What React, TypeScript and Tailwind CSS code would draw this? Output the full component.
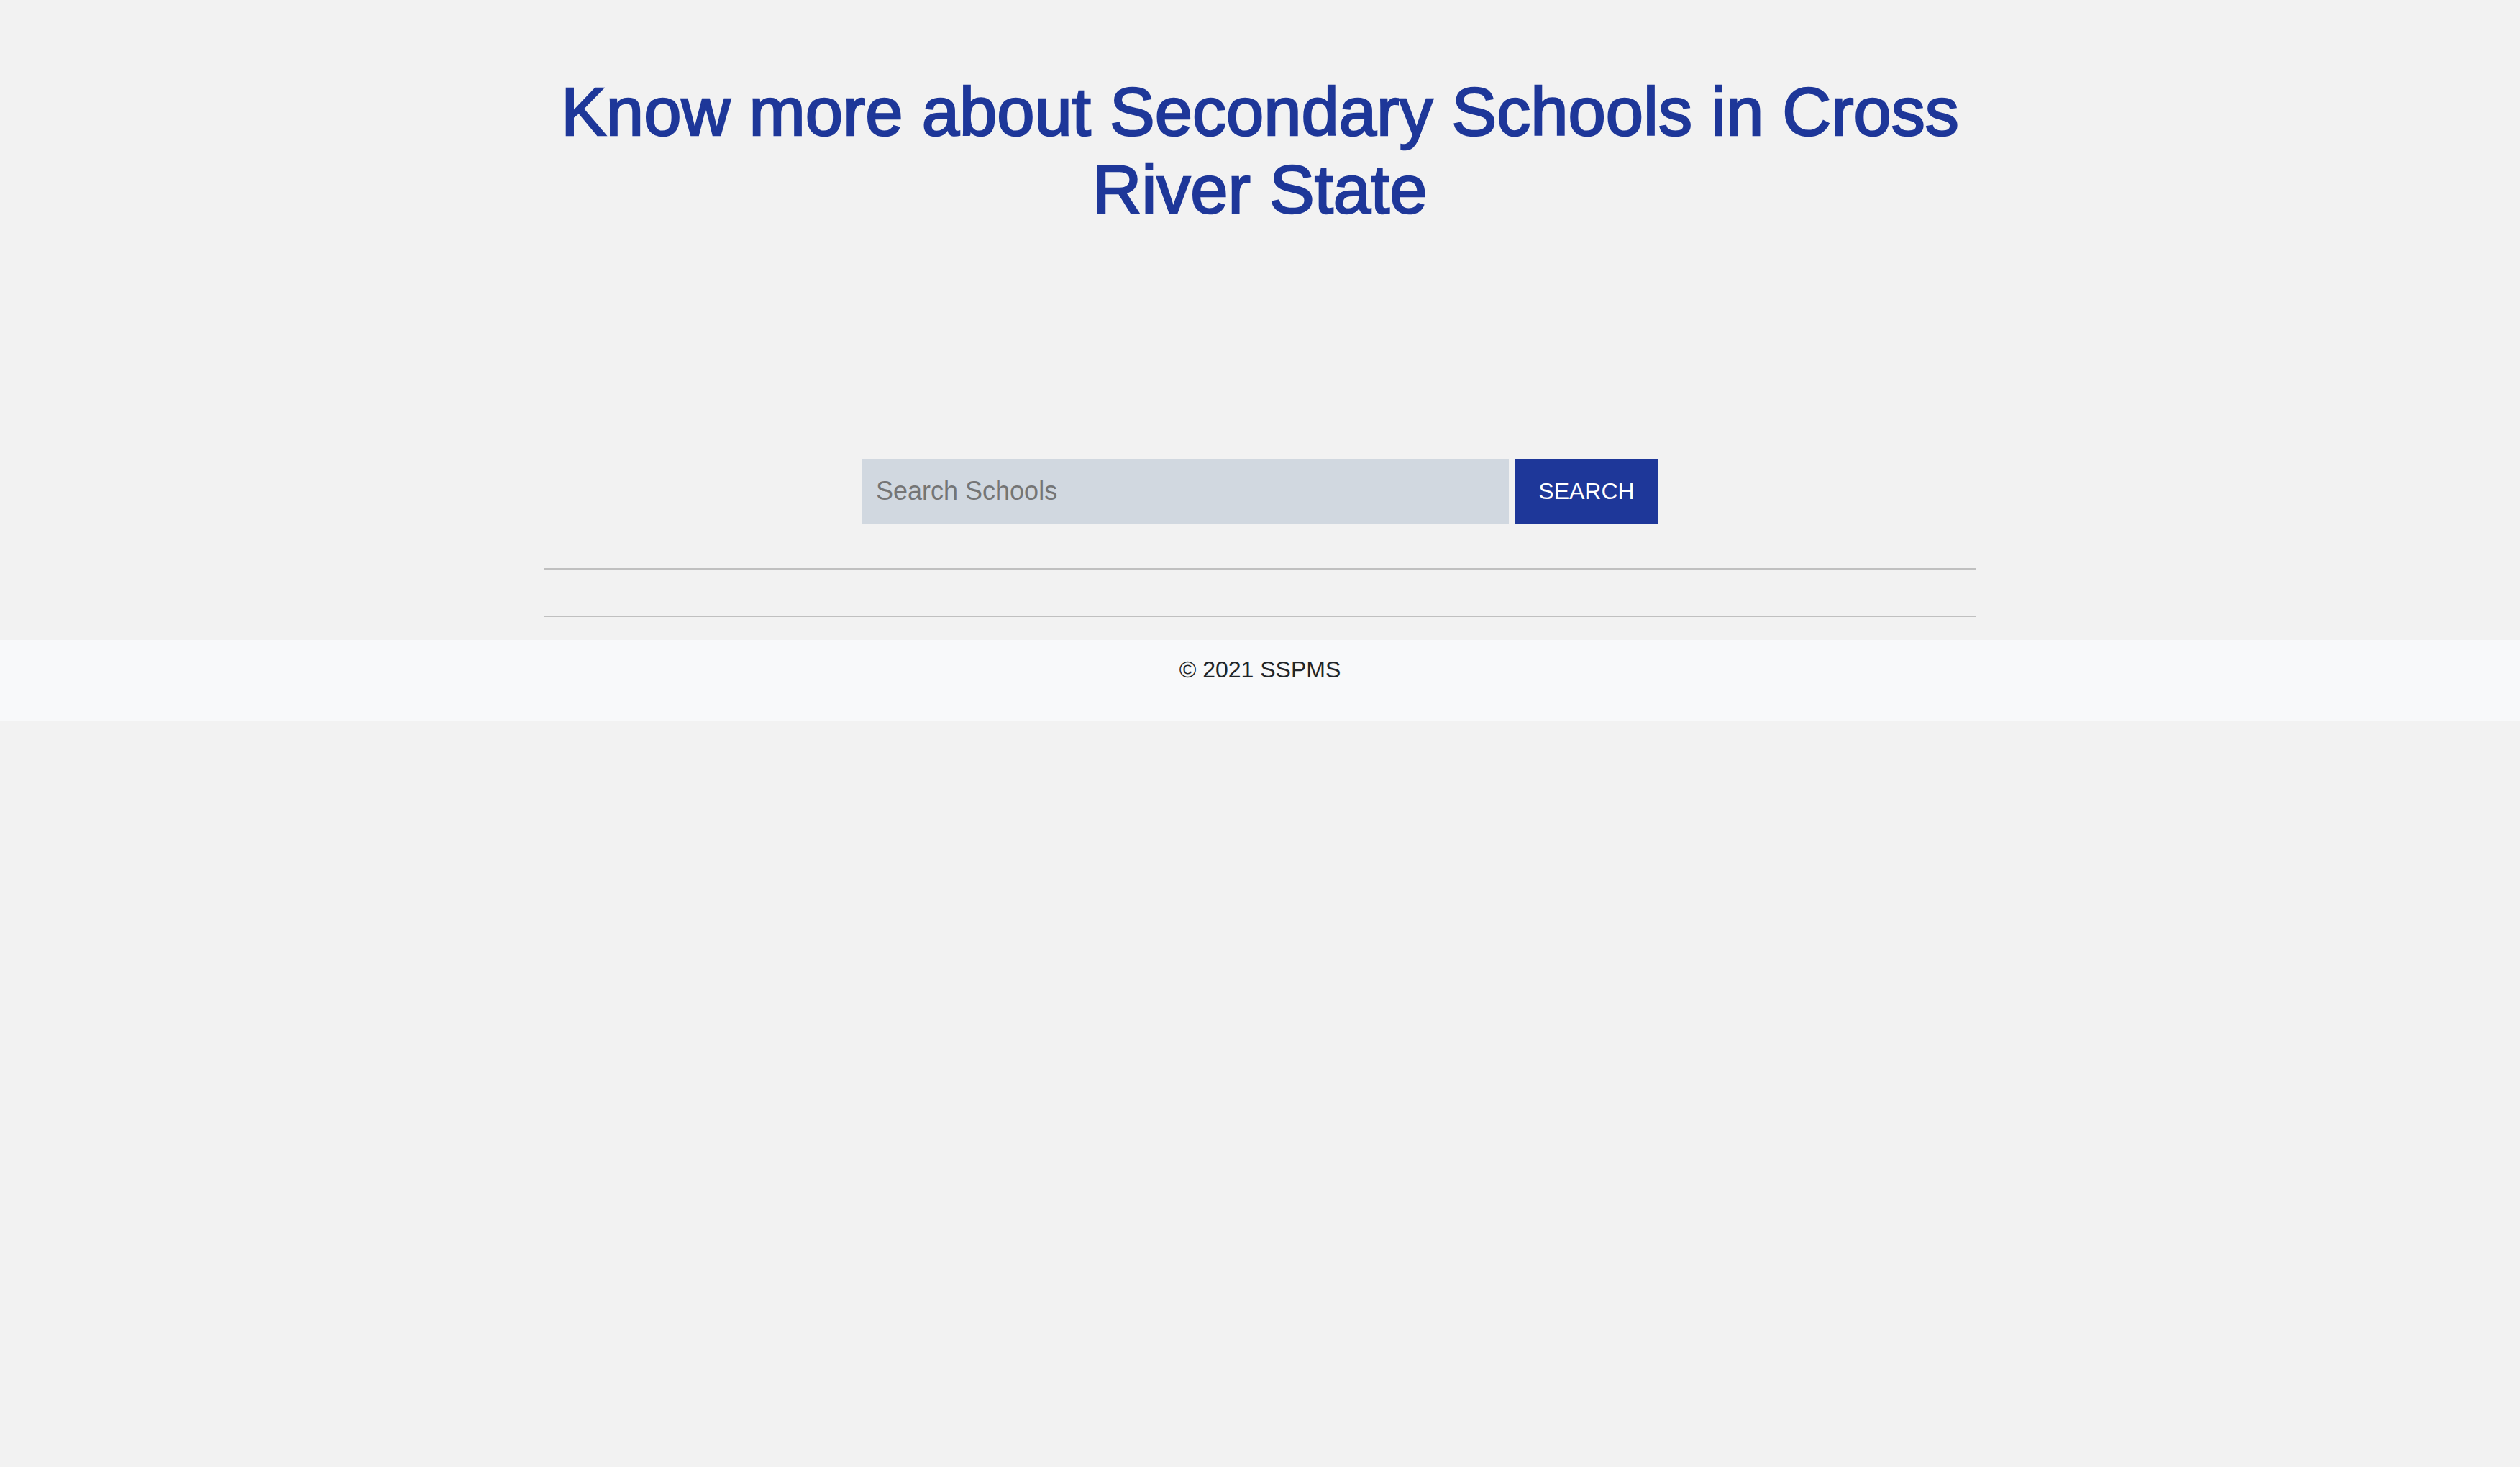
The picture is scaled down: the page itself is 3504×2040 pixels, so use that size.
import { useState } from "react";

export default function App() {
  const [query, setQuery] = useState("");

  return (
    <div className="min-h-screen bg-[#f2f2f2] font-['Liberation_Sans',Arial,sans-serif]">
      <main className="mx-auto w-[1992px] pt-[102px]">
        <h1 className="text-center text-[94px] leading-[108px] font-normal text-[#1e3799] [-webkit-text-stroke:2.5px_#1e3799]">
          Know more about Secondary Schools in Cross River State
        </h1>

        <form
          className="mt-[320px] flex justify-center"
          onSubmit={(e) => e.preventDefault()}
        >
          <input
            type="text"
            value={query}
            onChange={(e) => setQuery(e.target.value)}
            placeholder="Search Schools"
            className="h-[90px] w-[900px] bg-[#d1d8e0] px-5 text-[36px] text-[#333] placeholder:text-[#757575] outline-none"
          />
          <button
            type="submit"
            className="ml-2 h-[90px] w-[200px] bg-[#1e3799] text-[32px] text-white uppercase"
          >
            Search
          </button>
        </form>

        <hr className="mt-[62px] border-t-2 border-[#c0c0c0]" />
        <hr className="mt-[64px] border-t-2 border-[#c0c0c0]" />
      </main>

      <footer className="mt-8 h-[112px] bg-[#f8f9fa] pt-[17px] text-center text-[32px] leading-[48px] text-[#212529]">
        © 2021 SSPMS
      </footer>
    </div>
  );
}
